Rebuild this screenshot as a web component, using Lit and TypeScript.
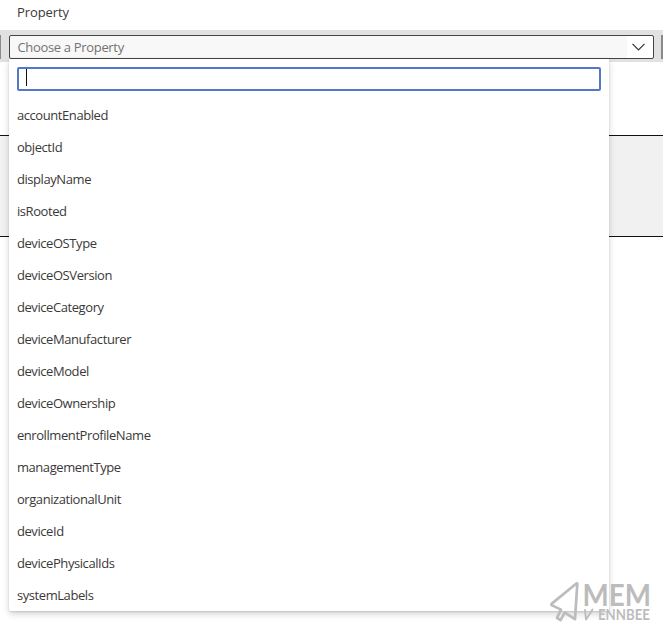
import { LitElement, html, css } from "lit";
import { customElement, property, state } from "lit/decorators.js";

const PROPERTIES = [
  "accountEnabled", "objectId", "displayName", "isRooted",
  "deviceOSType", "deviceOSVersion", "deviceCategory", "deviceManufacturer",
  "deviceModel", "deviceOwnership", "enrollmentProfileName", "managementType",
  "organizationalUnit", "deviceId", "devicePhysicalIds", "systemLabels",
];

@customElement("property-list")
class PropertyList extends LitElement {
  @property({ attribute: false }) items: string[] = [];

  static styles = css`
    :host {
      display: block;
      box-sizing: border-box;
      width: 600px;
      padding-top: 8px;
      background: #fff;
      border-radius: 0 0 2px 2px;
      box-shadow: 0 3px 7px rgba(0, 0, 0, 0.17), 0 1px 2px rgba(0, 0, 0, 0.12);
    }
    .search {
      box-sizing: border-box;
      display: flex;
      height: 24px;
      margin: 0 8px 8px;
      padding: 0 7px;
      border: 2px solid #5478c9;
      border-radius: 2px;
      background: #fff;
    }
    .caret {
      width: 1px;
      height: 17px;
      background: #111;
    }
    .item {
      height: 32px;
      line-height: 32px;
      padding-left: 8.4px;
      white-space: nowrap;
      letter-spacing: -0.42px;
    }
  `;

  render() {
    return html`
      <div class="search"><span class="caret"></span></div>
      ${this.items.map((i) => html`<div class="item">${i}</div>`)}
    `;
  }
}

@customElement("brand-mark")
class BrandMark extends LitElement {
  static styles = css`
    :host { display: block; }
    svg { display: block; overflow: visible; }
    text { font-family: Lato, sans-serif; fill: #bcbcbc; letter-spacing: 0; }
    .top { font-size: 31px; font-weight: 700; }
    .bottom { font-size: 15.5px; font-weight: 700; }
    .line { fill: none; stroke: #bcbcbc; stroke-linecap: round; stroke-linejoin: round; }
  `;

  render() {
    return html`
      <svg width="103" height="42" viewBox="0 0 103 42">
        <path class="line" stroke-width="2.7" d="M28.3 2.8 Q28 2 26.8 3 L2.8 22.6 Q1.8 23.8 3.2 24.4 L12 28.6 L8 36.8 L11.5 39.2 L15.8 31.6 L26 38.2 Z" />
        <text class="top" x="33.5" y="24.7" textLength="68.5" lengthAdjust="spacingAndGlyphs">MEM</text>
        <path class="line" stroke-width="1.9" d="M36 29 L37 38.5 L43.5 28.5" />
        <text class="bottom" x="49" y="39.3" textLength="52" lengthAdjust="spacingAndGlyphs">ENNBEE</text>
      </svg>
    `;
  }
}

@customElement("app-root")
class AppRoot extends LitElement {
  @state() private items = PROPERTIES;

  static styles = css`
    :host {
      display: block;
      position: relative;
      height: 634px;
      overflow: hidden;
      background: #fff;
      color: #3a3938;
      font: 13px "Open Sans", "Noto Sans", sans-serif;
      letter-spacing: -0.1px;
    }
    .heading {
      box-sizing: border-box;
      height: 30px;
      padding: 0 17px;
      line-height: 25px;
    }
    .row {
      box-sizing: border-box;
      display: flex;
      justify-content: space-between;
      height: 32px;
      padding-top: 5px;
      background: #e1e1e1;
    }
    .stub {
      box-sizing: border-box;
      width: 1px;
      height: 24px;
      background: #8a8a8a;
    }
    .stub.end { width: 2px; }
    .field { position: relative; width: 645px; }
    .combo {
      box-sizing: border-box;
      display: flex;
      align-items: center;
      justify-content: space-between;
      height: 24px;
      padding: 0 8px;
      border: 1px solid #444;
      border-radius: 2px;
      background: linear-gradient(90deg, #f8f8f8 96%, #fff 96%);
      color: #737373;
      letter-spacing: -0.33px;
    }
    .combo svg { fill: none; stroke: #333; stroke-width: 1.2; }
    .menu { position: absolute; top: 24px; left: 0; z-index: 1; }
    .band {
      box-sizing: border-box;
      height: 102px;
      margin-top: 73px;
      border: solid #111;
      border-width: 1px 0;
      background: #f1f1f1;
    }
    .brand { position: absolute; left: 549px; top: 581px; z-index: 2; }
  `;

  render() {
    return html`
      <div class="heading">Property</div>
      <div class="row">
        <span class="stub"></span>
        <div class="field">
          <div class="combo">
            <span>Choose a Property</span>
            <svg width="13" height="8" viewBox="0 0 13 8"><path d="M0.5 0.8 L6.5 6.8 L12.5 0.8" /></svg>
          </div>
          <property-list class="menu" .items=${this.items}></property-list>
        </div>
        <span class="stub end"></span>
      </div>
      <div class="band"></div>
      <brand-mark class="brand"></brand-mark>
    `;
  }
}
